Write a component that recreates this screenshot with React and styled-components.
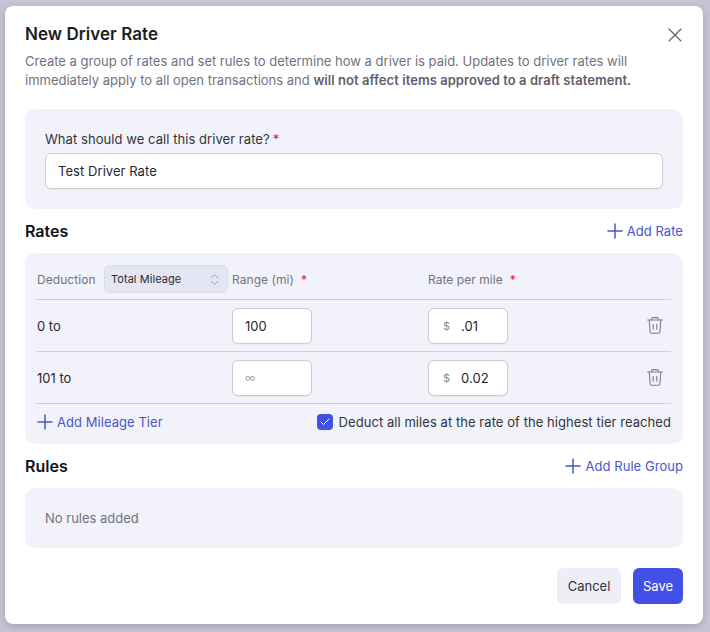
import React from "react";
import styled, { createGlobalStyle } from "styled-components";
import { X, Plus, ChevronsUpDown, Check } from "lucide-react";

const GlobalStyle = createGlobalStyle`
  html, body {
    margin: 0;
    height: 632px;
    overflow: hidden;
    font-family: Inter, "Liberation Sans", sans-serif;
    background: #c4c4d2;
  }
  * { box-sizing: border-box; }
`;

const Backdrop = styled.div`
  width: 710px;
  height: 632px;
  padding: 6px 7px 8px 5px;
  background: #c4c4d2;
`;

const Modal = styled.div`
  position: relative;
  height: 618px;
  padding: 18px 20px 20px;
  background: #fff;
  border-radius: 8px;
  box-shadow: 0 2px 6px rgba(60, 60, 90, 0.25);
`;

const Title = styled.h2`
  margin: 0;
  font-size: 17px;
  line-height: 20px;
  font-weight: 600;
  letter-spacing: 0.05px;
  color: #1c1d22;
`;

const Close = styled.button`
  position: absolute;
  top: 17px;
  right: 16px;
  display: flex;
  padding: 0;
  border: none;
  background: none;
  color: #62636c;
`;

const Description = styled.p`
  margin: 8px 0 0;
  font-size: 13px;
  line-height: 19px;
  color: #71727f;

  strong {
    font-weight: 600;
    letter-spacing: 0.05px;
    color: #5f606c;
  }
`;

const Card = styled.div`
  background: #f2f3fa;
  border-radius: 10px;
  padding: ${(p) => p.$padding};
`;

const NameCard = styled(Card)`
  margin-top: 19px;
  height: 100px;
`;

const Label = styled.label`
  display: block;
  font-size: 13px;
  line-height: 20px;
  letter-spacing: 0.06px;
  color: #33343c;
  margin-bottom: 4px;
`;

const Star = styled.span`
  color: #d6204e;
  margin-left: ${(p) => p.$gap || 3}px;
`;

const TextInput = styled.div`
  height: 36px;
  padding: 0 12px;
  display: flex;
  align-items: center;
  background: #fff;
  border: 1px solid #cbcbd6;
  border-radius: 6px;
  font-size: 13px;
  letter-spacing: 0.06px;
  color: #26272d;
  box-shadow: 0 1px 1px rgba(40, 40, 70, 0.06);
`;

const SectionHead = styled.div`
  display: flex;
  align-items: center;
  justify-content: space-between;
  height: 22px;
  margin: 11px 0;
`;

const SectionTitle = styled.h3`
  margin: 0;
  font-size: 16px;
  line-height: 22px;
  font-weight: 600;
  color: #111216;
`;

const AddLink = styled.button`
  display: flex;
  align-items: center;
  gap: 5px;
  padding: 0;
  border: none;
  background: none;
  font: inherit;
  font-size: 13px;
  line-height: 20px;
  letter-spacing: 0.05px;
  color: #4a55c9;
`;

const AddIcon = styled(Plus)`
  margin: -5px;
  flex: none;
`;

const RatesCard = styled(Card)`
  height: 191px;
`;

const TierRow = styled.div`
  display: grid;
  grid-template-columns: 195px 196px 1fr 24px;
  align-items: center;
  height: ${(p) => p.$height}px;
  border-bottom: 1px solid #cfcfd9;
`;

const HeadCell = styled.div`
  display: flex;
  align-items: center;
  align-self: start;
  height: 28px;
  font-size: 12px;
  letter-spacing: 0.05px;
  color: #71727f;
`;

const Select = styled.div`
  display: flex;
  align-items: center;
  justify-content: space-between;
  width: 124px;
  height: 28px;
  margin: 0 4px 0 auto;
  padding: 0 5px 0 6px;
  background: #e5e6f3;
  border: 1px solid #dcdcea;
  border-radius: 6px;
  font-size: 11px;
  color: #2c2d34;
`;

const TierLabel = styled.div`
  font-size: 13px;
  color: #26272d;
`;

const SmallInput = styled(TextInput)`
  width: 80px;
`;

const Prefix = styled.span`
  font-size: 11px;
  color: #85868f;
  width: 18px;
  margin-left: 2px;
`;

const Placeholder = styled.span`
  font-size: 11px;
  color: #a5a6b0;
`;

const Trash = styled.button`
  display: flex;
  padding: 0;
  border: none;
  background: none;
  color: #7d7e8a;
`;

const TierFooter = styled.div`
  display: flex;
  align-items: center;
  justify-content: space-between;
  height: 36px;
  padding-left: 1px;
`;

const CheckLabel = styled.label`
  display: flex;
  align-items: center;
  gap: 6px;
  font-size: 13px;
  letter-spacing: 0.06px;
  color: #33343c;
`;

const CheckBox = styled.span`
  display: flex;
  align-items: center;
  justify-content: center;
  width: 16px;
  height: 16px;
  border-radius: 4px;
  background: #4350e6;
  color: #fff;
`;

const EmptyCard = styled(Card)`
  height: 60px;
  display: flex;
  align-items: center;
  font-size: 13px;
  color: #71727f;
`;

const Actions = styled.div`
  display: flex;
  justify-content: flex-end;
  gap: 12px;
  margin-top: 20px;
`;

const Button = styled.button`
  height: 36px;
  width: ${(p) => (p.$primary ? 50 : 64)}px;
  padding: 0;
  border: none;
  border-radius: 6px;
  font: inherit;
  font-size: 13px;
  background: ${(p) => (p.$primary ? "#4350e6" : "#edeef6")};
  color: ${(p) => (p.$primary ? "#fff" : "#33343c")};
`;

const TrashIcon = () => (
  <svg width="16" height="17" viewBox="0 0 16 17" fill="none" stroke="currentColor" strokeWidth="1.1" strokeLinecap="round" strokeLinejoin="round">
    <path d="M.6 3h14.8" />
    <path d="M4.6 3V2a1.4 1.4 0 0 1 1.4-1.4h4A1.4 1.4 0 0 1 11.400 2v1" />
    <path d="M2.200 3l.9 11.700a1.600 1.600 0 0 0 1.600 1.500h6.600a1.600 1.600 0 0 0 1.600-1.500l.9-11.700" />
    <path d="M6.200 7.200v5M9.800 7.200v5" />
  </svg>
);

const tiers = [
  { from: "0 to", to: "100", rate: ".01" },
  { from: "101 to", to: null, rate: "0.02" },
];

export default function App() {
  return (
    <>
      <GlobalStyle />
      <Backdrop>
        <Modal>
          <Title>New Driver Rate</Title>
          <Close aria-label="Close">
            <X size={24} strokeWidth={1.15} />
          </Close>
          <Description>
            Create a group of rates and set rules to determine how a driver is paid. Updates to driver rates will
            immediately apply to all open transactions and{" "}
            <strong>will not affect items approved to a draft statement.</strong>
          </Description>

          <NameCard $padding="20px">
            <Label>
              What should we call this driver rate?<Star>*</Star>
            </Label>
            <TextInput>Test Driver Rate</TextInput>
          </NameCard>

          <SectionHead>
            <SectionTitle>Rates</SectionTitle>
            <AddLink>
              <AddIcon size={24} strokeWidth={1.5} />
              Add Rate
            </AddLink>
          </SectionHead>

          <RatesCard $padding="12px 12px 0">
            <TierRow $height={35}>
              <HeadCell>
                Deduction
                <Select>
                  Total Mileage
                  <ChevronsUpDown size={15} strokeWidth={1.2} color="#85868f" />
                </Select>
              </HeadCell>
              <HeadCell>
                Range (mi)<Star $gap={7}>*</Star>
              </HeadCell>
              <HeadCell>
                Rate per mile<Star $gap={7}>*</Star>
              </HeadCell>
            </TierRow>
            {tiers.map((t) => (
              <TierRow $height={52} key={t.from}>
                <TierLabel>{t.from}</TierLabel>
                <SmallInput>{t.to || <Placeholder>∞</Placeholder>}</SmallInput>
                <SmallInput>
                  <Prefix>$</Prefix>
                  {t.rate}
                </SmallInput>
                <Trash aria-label="Delete">
                  <TrashIcon />
                </Trash>
              </TierRow>
            ))}
            <TierFooter>
              <AddLink>
                <AddIcon size={24} strokeWidth={1.5} />
                Add Mileage Tier
              </AddLink>
              <CheckLabel>
                <CheckBox>
                  <Check size={12} strokeWidth={2} />
                </CheckBox>
                Deduct all miles at the rate of the highest tier reached
              </CheckLabel>
            </TierFooter>
          </RatesCard>

          <SectionHead>
            <SectionTitle>Rules</SectionTitle>
            <AddLink>
              <AddIcon size={24} strokeWidth={1.5} />
              Add Rule Group
            </AddLink>
          </SectionHead>

          <EmptyCard $padding="0 20px">No rules added</EmptyCard>

          <Actions>
            <Button>Cancel</Button>
            <Button $primary>Save</Button>
          </Actions>
        </Modal>
      </Backdrop>
    </>
  );
}
